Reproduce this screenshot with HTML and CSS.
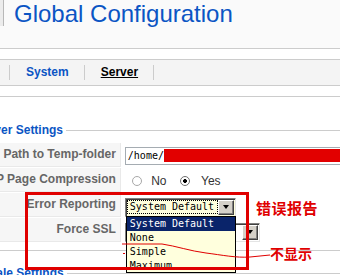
FILE: index.html
```html
<!doctype html>
<html lang="en">
    <head>
        <meta charset="UTF-8" />
        <title>Global Configuration</title>
        <link rel="stylesheet" href="styles.css">
    </head>
    <body>
        <div class="header">
            <div class="icon"></div>
            <h1>Global Configuration</h1>
        </div>

        <div class="submenu">
            <ul>
                <li><a href="#">System</a></li>
                <li><a href="#" class="active">Server</a></li>
            </ul>
        </div>

        <div class="content">
            <fieldset class="panel">
                <legend>Server Settings</legend>
                <table class="admintable">
                    <!-- Temp folder -->
                    <tr>
                        <td class="key">Path to Temp-folder</td>
                        <td class="value">
                            <div class="textbox">/home/<span class="redact"></span></div>
                        </td>
                    </tr>
                    <!-- Gzip -->
                    <tr>
                        <td class="key">GZIP Page Compression</td>
                        <td class="value">
                            <input class="radio" type="radio" name="gzip" id="gzip0" />
                            <label for="gzip0">No</label>
                            <input class="radio second" type="radio" name="gzip" id="gzip1" checked />
                            <label for="gzip1">Yes</label>
                        </td>
                    </tr>
                    <!-- Error reporting, list is open -->
                    <tr>
                        <td class="key">Error Reporting</td>
                        <td class="value pick">
                            <div class="select focus">
                                <span class="select-text"><span class="focus-ring">System Default</span></span>
                                <span class="select-btn"><span class="arrow"></span></span>
                                <ul class="select-list">
                                    <li class="selected">System Default</li>
                                    <li>None</li>
                                    <li>Simple</li>
                                    <li>Maximum</li>
                                </ul>
                            </div>
                        </td>
                    </tr>
                    <!-- SSL -->
                    <tr>
                        <td class="key">Force SSL</td>
                        <td class="value pick">
                            <div class="select wide">
                                <span class="select-text"><span class="plain">None</span></span>
                                <span class="select-btn"><span class="arrow"></span></span>
                            </div>
                        </td>
                    </tr>
                </table>
            </fieldset>

            <fieldset class="panel">
                <legend>Locale Settings</legend>
            </fieldset>
        </div>

        <!-- hand drawn notes on top of the shot -->
        <div class="note-box"></div>
        <div class="note note-error">错误报告</div>
        <div class="note note-hide">不显示</div>
        <svg class="note-line" width="340" height="275" viewBox="0 0 340 275">
            <path d="M122 244 L162 244 C176 246 190 251 206 253 C222 255 236 258 250 257 L270 255" fill="none" stroke="#e00000" stroke-width="1" />
            <path d="M123 253.5 L125 253.5" fill="none" stroke="#e00000" stroke-width="1" />
        </svg>
    </body>
</html>
```

FILE: styles.css
```css
body {
    margin: 0;
    font-family: "Liberation Sans", Arial, sans-serif;
    font-size: 12px;
    color: #333;
    background: #fff;
    width: 340px;
    height: 275px;
    overflow: hidden;
    position: relative;
}
.header {
    display: flex;
    align-items: flex-start;
    height: 48px;
    background: #fafafa;
    border-bottom: 1px solid #ccc;
}
.header .icon {
    flex: none;
    width: 3px;
    height: 26px;
    background: #ececec;
    border-right: 1px solid #b8b8b8;
}
.header h1 {
    margin: 0 0 0 10px;
    font-family: "Liberation Sans", Arial, sans-serif;
    font-weight: normal;
    font-size: 24px;
    line-height: 28px;
    color: #0b55c4;
    white-space: nowrap;
}
.submenu {
    margin-top: 10px;
    height: 25px;
    background: #f4f4f4;
    border-top: 1px solid #ccc;
    border-bottom: 1px solid #ccc;
}
.submenu ul {
    display: flex;
    align-items: center;
    height: 100%;
    margin: 0 0 0 9px;
    padding: 0;
    list-style: none;
}
.submenu li {
    border-left: 1px solid #ccc;
    padding: 0 15px 0 16px;
    line-height: 15px;
}
.submenu li:last-child {
    border-right: 1px solid #ccc;
}
.submenu a {
    color: #0b55c4;
    font-weight: bold;
    text-decoration: none;
}
.submenu a.active {
    color: #000;
    text-decoration: underline;
}
.content {
    margin-top: 10px;
    border-top: 1px solid #ccc;
}
.panel {
    width: 460px;
    margin: 26px 0 0 -40px;
    padding: 5px 10px 7px;
    border: 1px solid #ccc;
}
.panel + .panel {
    margin-top: 15px;
}
.panel legend {
    margin-left: 1px;
    padding: 0 3px;
    color: #0b55c4;
    font-weight: bold;
    line-height: 14px;
}
.admintable {
    border-collapse: separate;
    border-spacing: 1px;
    width: 100%;
}
.admintable td.key {
    width: 140px;
    padding: 4px 4px 5px;
    background: #f6f6f6;
    border-bottom: 1px solid #e9e9e9;
    border-right: 1px solid #e9e9e9;
    text-align: right;
    color: #666;
    font-weight: bold;
    line-height: 14px;
    white-space: nowrap;
}
.admintable td.value {
    padding: 2px 3px 0;
    vertical-align: middle;
    white-space: nowrap;
}
.admintable td.pick {
    padding-top: 4px;
}
.textbox {
    box-sizing: border-box;
    width: 320px;
    height: 18px;
    padding: 0 2px;
    border: 1px solid #a5acb2;
    background: #fff;
    font: 10px/16px "DejaVu Sans Mono", monospace;
    color: #000;
}
.redact {
    display: inline-block;
    width: 180px;
    height: 13px;
    background: #e20000;
    vertical-align: -3px;
}
.radio {
    appearance: none;
    box-sizing: border-box;
    width: 10px;
    height: 10px;
    margin: 0 6px 0 7px;
    border: 1px solid #a8a8a8;
    border-radius: 50%;
    background: #fff;
    vertical-align: -1px;
}
.radio.second {
    margin-left: 10px;
    margin-right: 8px;
}
.radio:checked {
    border-color: #707070;
    background: radial-gradient(circle, #000 0 1.6px, #fff 2.2px);
}
.value label {
    color: #333;
    font-size: 12px;
}
.select {
    position: relative;
    display: inline-flex;
    box-sizing: border-box;
    width: 111px;
    height: 19px;
    border: 1px solid;
    border-color: #808080 #e4e4e4 #e4e4e4 #808080;
    box-shadow: inset 1px 1px #404040;
    background: #fff;
    vertical-align: middle;
    font: 10px "DejaVu Sans Mono", monospace;
    color: #000;
}
.select.focus {
    background: #ffd;
}
.select.wide {
    width: 135px;
}
.select-text {
    flex: 1;
    display: flex;
    align-items: center;
    padding: 2px 1px 2px 2px;
}
.focus-ring,
.plain {
    flex: 1;
    padding: 0 2px;
    line-height: 12px;
}
.focus-ring {
    outline: 1px dotted #000;
}
.select-btn {
    flex: none;
    display: flex;
    align-items: center;
    justify-content: center;
    box-sizing: border-box;
    width: 16px;
    height: 15px;
    margin: 1px 1px 0 0;
    background: #d4d0c8;
    border: 1px solid;
    border-color: #fff #404040 #404040 #fff;
    box-shadow: inset -1px -1px #808080;
}
.arrow {
    width: 0;
    height: 0;
    border-left: 3.5px solid transparent;
    border-right: 3.5px solid transparent;
    border-top: 4px solid #000;
}
.select-list {
    position: absolute;
    top: 100%;
    left: 0;
    z-index: 2;
    box-sizing: border-box;
    width: 110px;
    height: 57px;
    overflow: hidden;
    margin: 0;
    padding: 0;
    list-style: none;
    background: #ffd;
    border: 1px solid #000;
}
.select-list li {
    padding: 0 3px;
    line-height: 14px;
}
.select-list li.selected {
    background: #0a246a;
    color: #fff;
}
.note-box {
    position: absolute;
    left: 25px;
    top: 192px;
    box-sizing: border-box;
    width: 224px;
    height: 78px;
    border: 3px solid #e00000;
    z-index: 3;
}
.note {
    position: absolute;
    z-index: 3;
    font-family: "Noto Sans CJK SC", sans-serif;
    font-weight: bold;
    font-size: 14px;
    line-height: 16px;
    color: #e00000;
    white-space: nowrap;
}
.note-error {
    left: 256px;
    top: 200px;
    font-size: 15px;
    letter-spacing: 0.5px;
}
.note-hide {
    left: 270px;
    top: 245px;
}
.note-line {
    position: absolute;
    left: 0;
    top: 0;
    z-index: 4;
}
```
